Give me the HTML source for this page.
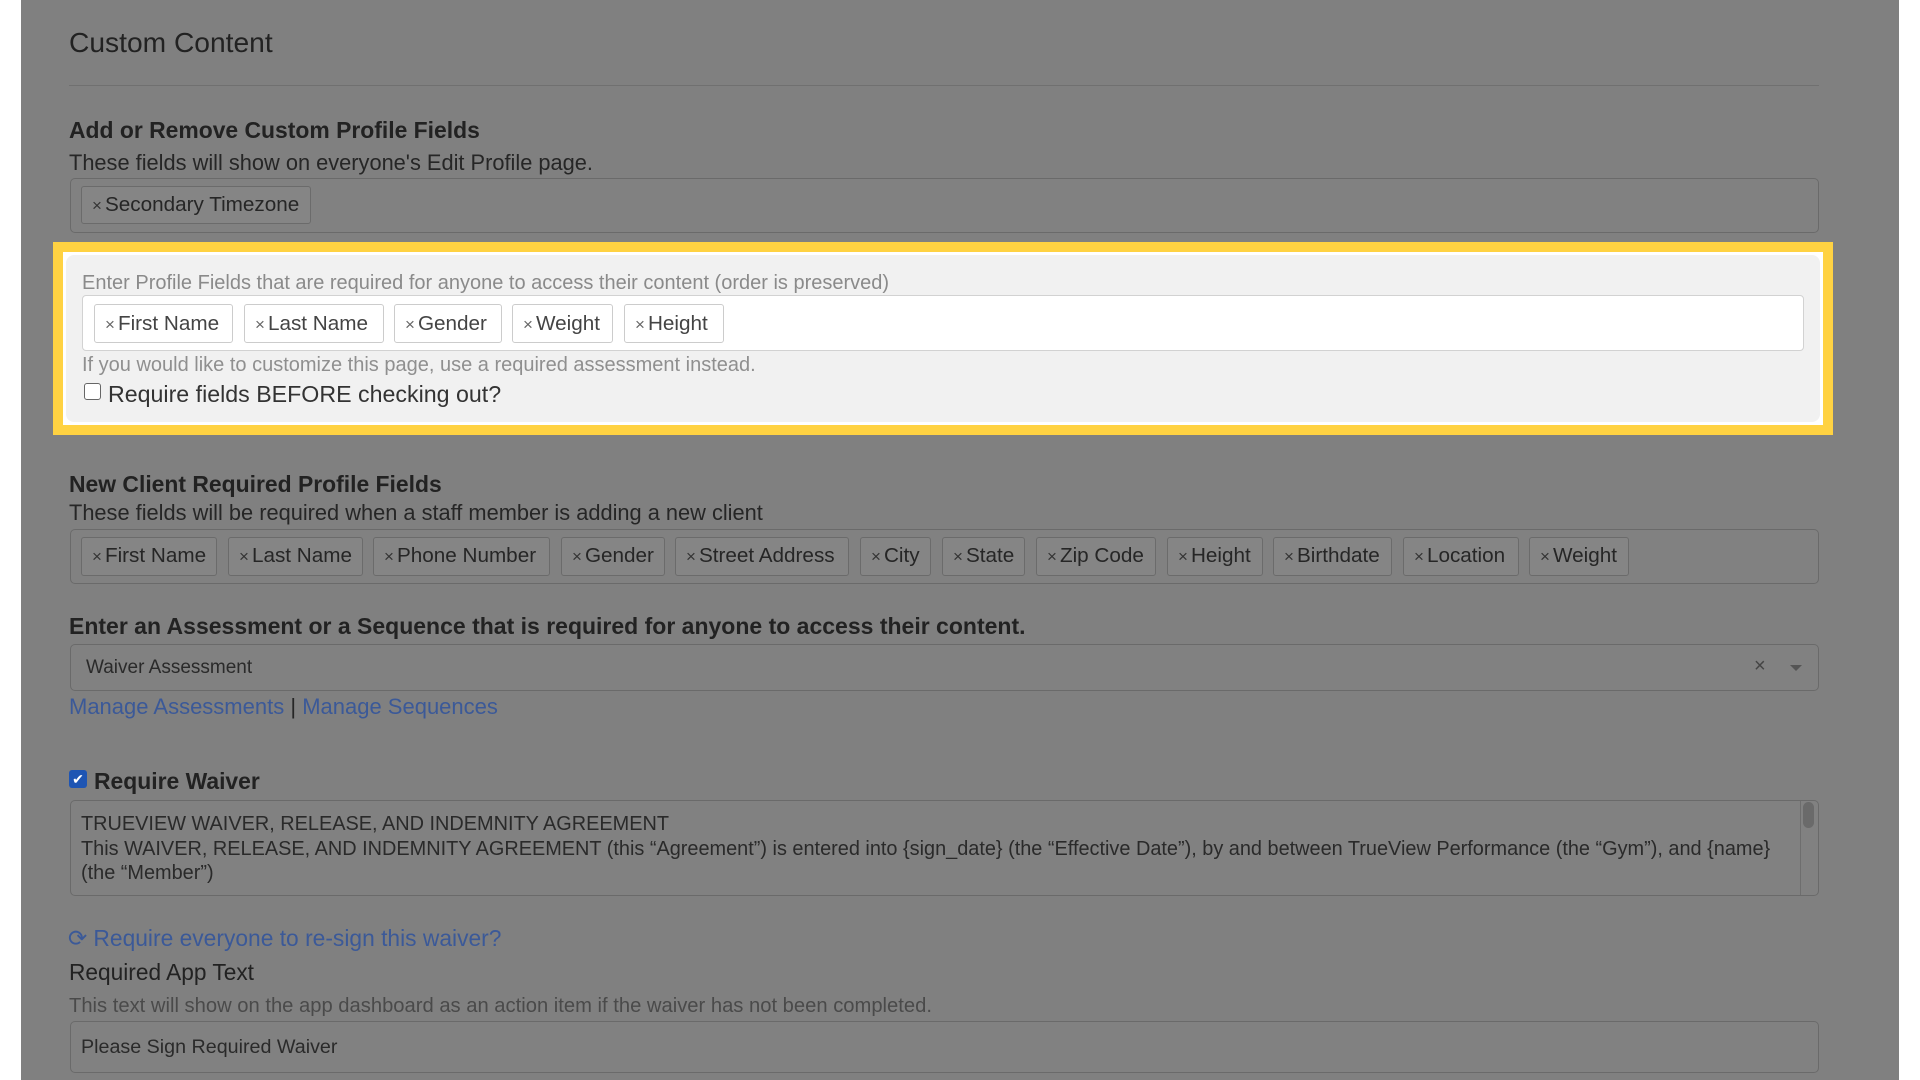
<!DOCTYPE html>
<html><head><meta charset="utf-8"><style>
*{box-sizing:border-box;margin:0;padding:0}
body{width:1920px;height:1080px;background:#fff;position:relative;overflow:hidden;font-family:"Liberation Sans",Arial,sans-serif;color:#262626}
.panel{position:absolute;left:21px;top:0;width:1878px;height:1080px;background:#808080}
.a{position:absolute;white-space:nowrap}
.box{position:absolute;border:1px solid #6a6a6a;border-radius:5px;background:#818181}
.tag{position:absolute;border:1px solid #6b6b6b;border-radius:3px;background:#858585;font-size:20.7px;line-height:36px;padding-left:10px;color:#262626;white-space:nowrap}
.tag b{font-weight:normal;font-size:17px;color:#333;margin-right:3px}
.wt{position:absolute;border:1px solid #ccc;border-radius:3px;background:#fff;font-size:20.7px;line-height:37px;padding-left:10px;color:#444;white-space:nowrap}
.wt b{font-weight:normal;font-size:17px;color:#666;margin-right:3px}
.h{font-weight:bold;font-size:22.9px;color:#222}
.lk{color:#3b5998}
</style></head><body>
<div class="panel"></div>
<div class="a" style="left:69px;top:26px;font-size:28.2px;color:#222">Custom Content</div>
<div class="a" style="left:69px;top:85px;width:1750px;height:1px;background:#707070"></div>
<div class="a h" style="left:69px;top:117px">Add or Remove Custom Profile Fields</div>
<div class="a" style="left:69px;top:150px;font-size:21.8px">These fields will show on everyone's Edit Profile page.</div>
<div class="box" style="left:70px;top:178px;width:1749px;height:55px"></div>
<div class="tag" style="left:81px;top:186px;width:230px;height:38px"><b>×</b>Secondary Timezone</div>

<div class="a" style="left:53px;top:242px;width:1780px;height:193px;background:#ffd242"></div>
<div class="a" style="left:63px;top:252px;width:1760px;height:173px;background:#fff"></div>
<div class="a" style="left:66px;top:255px;width:1754px;height:167px;background:#f1f1f1;border-radius:8px"></div>
<div class="a" style="left:82px;top:272px;font-size:20px;color:#8a8a8a">Enter Profile Fields that are required for anyone to access their content (order is preserved)</div>
<div class="a" style="left:82px;top:295px;width:1722px;height:56px;background:#fff;border:1px solid #d2d2d2;border-radius:4px"></div>
<div class="wt" style="left:94px;top:304px;width:139px;height:39px"><b>×</b>First Name</div>
<div class="wt" style="left:244px;top:304px;width:140px;height:39px"><b>×</b>Last Name</div>
<div class="wt" style="left:394px;top:304px;width:108px;height:39px"><b>×</b>Gender</div>
<div class="wt" style="left:512px;top:304px;width:101px;height:39px"><b>×</b>Weight</div>
<div class="wt" style="left:624px;top:304px;width:100px;height:39px"><b>×</b>Height</div>
<div class="a" style="left:82px;top:354px;font-size:20px;color:#8f8f8f">If you would like to customize this page, use a required assessment instead.</div>
<div class="a" style="left:84px;top:383px;width:17px;height:17px;border:1px solid #666;border-radius:3px;background:#fff"></div>
<div class="a" style="left:108px;top:381px;font-size:23.2px;color:#333">Require fields BEFORE checking out?</div>

<div class="a h" style="left:69px;top:471px">New Client Required Profile Fields</div>
<div class="a" style="left:69px;top:500px;font-size:21.8px">These fields will be required when a staff member is adding a new client</div>
<div class="box" style="left:70px;top:529px;width:1749px;height:55px"></div>
<div class="tag" style="left:81px;top:537px;width:136px;height:39px"><b>×</b>First Name</div>
<div class="tag" style="left:228px;top:537px;width:135px;height:39px"><b>×</b>Last Name</div>
<div class="tag" style="left:373px;top:537px;width:177px;height:39px"><b>×</b>Phone Number</div>
<div class="tag" style="left:561px;top:537px;width:104px;height:39px"><b>×</b>Gender</div>
<div class="tag" style="left:675px;top:537px;width:174px;height:39px"><b>×</b>Street Address</div>
<div class="tag" style="left:860px;top:537px;width:71px;height:39px"><b>×</b>City</div>
<div class="tag" style="left:942px;top:537px;width:83px;height:39px"><b>×</b>State</div>
<div class="tag" style="left:1036px;top:537px;width:120px;height:39px"><b>×</b>Zip Code</div>
<div class="tag" style="left:1167px;top:537px;width:96px;height:39px"><b>×</b>Height</div>
<div class="tag" style="left:1273px;top:537px;width:119px;height:39px"><b>×</b>Birthdate</div>
<div class="tag" style="left:1403px;top:537px;width:116px;height:39px"><b>×</b>Location</div>
<div class="tag" style="left:1529px;top:537px;width:100px;height:39px"><b>×</b>Weight</div>

<div class="a h" style="left:69px;top:613px;font-size:23px">Enter an Assessment or a Sequence that is required for anyone to access their content.</div>
<div class="box" style="left:70px;top:644px;width:1749px;height:47px"></div>
<div class="a" style="left:86px;top:657px;font-size:19px;color:#2a2a2a">Waiver Assessment</div>
<div class="a" style="left:1754px;top:655px;font-size:20px;color:#444">×</div>
<div class="a" style="left:1790px;top:665px;width:0;height:0;border-left:6px solid transparent;border-right:6px solid transparent;border-top:6px solid #555"></div>
<div class="a" style="left:69px;top:694px;font-size:22px"><span class="lk">Manage Assessments</span> | <span class="lk">Manage Sequences</span></div>

<div class="a" style="left:69px;top:770px;width:18px;height:18px;background:#1e55b3;border-radius:3px;color:#fff;font-size:14px;line-height:18px;text-align:center">✔</div>
<div class="a h" style="left:94px;top:768px">Require Waiver</div>
<div class="box" style="left:70px;top:800px;width:1749px;height:96px"></div>
<div class="a" style="left:1800px;top:801px;width:18px;height:94px;border-left:1px solid #6e6e6e"></div>
<div class="a" style="left:1803px;top:802px;width:11px;height:26px;background:#6a6a6a;border-radius:6px"></div>
<div class="a" style="left:81px;top:812px;font-size:19.9px;line-height:24.5px;color:#2a2a2a;white-space:normal;width:1720px">TRUEVIEW WAIVER, RELEASE, AND INDEMNITY AGREEMENT<br>This WAIVER, RELEASE, AND INDEMNITY AGREEMENT (this “Agreement”) is entered into {sign_date} (the “Effective Date”), by and between TrueView Performance (the “Gym”), and {name}<br>(the “Member”)</div>
<div class="a lk" style="left:68px;top:925px;font-size:22.8px">⟳ Require everyone to re-sign this waiver?</div>
<div class="a" style="left:69px;top:959px;font-size:22.7px;color:#222">Required App Text</div>
<div class="a" style="left:69px;top:995px;font-size:20.2px;color:#4a4a4a">This text will show on the app dashboard as an action item if the waiver has not been completed.</div>
<div class="box" style="left:70px;top:1021px;width:1749px;height:52px"></div>
<div class="a" style="left:81px;top:1036px;font-size:19.7px;color:#2a2a2a">Please Sign Required Waiver</div>
</body></html>
